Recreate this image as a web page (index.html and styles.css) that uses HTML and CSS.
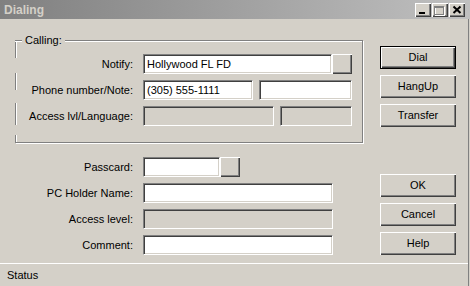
FILE: index.html
```html
<!doctype html>
<html>
<head>
<meta charset="UTF-8">
<title>Dialing</title>
<link rel="stylesheet" href="styles.css">
</head>
<body>
<div class="window">
  <div class="titlebar">
    <span class="title">Dialing</span>
    <div class="caption-buttons">
      <span class="capbtn">
        <svg width="16" height="14" viewBox="0 0 16 14"><rect x="4" y="9" width="6" height="2" fill="#000"/></svg>
      </span>
      <span class="capbtn">
        <svg width="16" height="14" viewBox="0 0 16 14">
          <rect x="3.5" y="4.5" width="9" height="8" fill="none" stroke="#fff"/>
          <rect x="2.5" y="3.5" width="9" height="8" fill="none" stroke="#808080"/>
          <rect x="3" y="4" width="8" height="1" fill="#808080"/>
        </svg>
      </span>
      <span class="capbtn close">
        <svg width="16" height="14" viewBox="0 0 16 14">
          <path d="M4.5 3.5l7 6.5M11.5 3.5l-7 6.5" stroke="#000" stroke-width="2" fill="none"/>
        </svg>
      </span>
    </div>
  </div>

  <div class="client">
    <div class="main">
      <div class="leftcol">
        <div class="groupbox">
          <span class="legend">Calling:</span>
          <div class="row">
            <span class="lbl">Notify:</span>
            <div class="edit w-notify">Hollywood FL FD</div>
            <div class="btn browse"></div>
          </div>
          <div class="row">
            <span class="lbl">Phone number/Note:</span>
            <div class="edit w-phone">(305) 555-1111</div>
            <div class="edit w-note"></div>
          </div>
          <div class="row row-last">
            <span class="lbl">Access lvl/Language:</span>
            <div class="edit disabled w-access"></div>
            <div class="edit disabled w-lang"></div>
          </div>
        </div>

        <div class="form">
          <div class="row">
            <span class="lbl">Passcard:</span>
            <div class="edit w-pass"></div>
            <div class="btn browse"></div>
          </div>
          <div class="row">
            <span class="lbl">PC Holder Name:</span>
            <div class="edit w-full"></div>
          </div>
          <div class="row">
            <span class="lbl">Access level:</span>
            <div class="edit disabled w-full"></div>
          </div>
          <div class="row">
            <span class="lbl">Comment:</span>
            <div class="edit w-full"></div>
          </div>
        </div>
      </div>

      <div class="buttons">
        <div class="btn cmd default">Dial</div>
        <div class="btn cmd">HangUp</div>
        <div class="btn cmd">Transfer</div>
        <div class="btn cmd first-lower">OK</div>
        <div class="btn cmd">Cancel</div>
        <div class="btn cmd">Help</div>
      </div>
    </div>
    <div class="status">Status</div>
  </div>
</div>
</body>
</html>
```

FILE: styles.css
```css
body {
  margin: 0;
  padding: 0;
  background: #d4d0c8;
  font-family: "Liberation Sans", Arial, sans-serif;
  font-size: 11px;
  color: #000;
}

.window {
  width: 470px;
  height: 286px;
  overflow: hidden;
  background: #d4d0c8;
}

/* title bar */
.titlebar {
  height: 19px;
  display: flex;
  align-items: center;
  justify-content: space-between;
  background: linear-gradient(to right, #808080, #c0c0c0);
}

.title {
  padding-left: 4px;
  font-size: 12px;
  font-weight: bold;
  color: #d4d0c8;
}

.caption-buttons {
  display: flex;
  gap: 1px;
  padding-right: 5px;
  padding-top: 1px;
}

.capbtn {
  width: 16px;
  height: 14px;
  box-sizing: border-box;
  background: #d4d0c8;
  box-shadow: inset 1px 1px #fff, inset -1px -1px #404040, inset -2px -2px #808080;
}

.capbtn svg {
  display: block;
}

/* client area */
.client {
  height: 267px;
  margin-right: 1px;
  border-right: 1px solid #808080;
}

.main {
  height: 244px;
  display: flex;
  padding: 21px 0 0 15px;
  box-sizing: border-box;
}

.leftcol {
  width: 348px;
}

.groupbox {
  position: relative;
  height: 103px;
  box-sizing: border-box;
  border: 1px solid #808080;
  border-left: 0;
  padding: 13px 0 0 1px;
  box-shadow: inset 0 1px #fff, 1px 1px #fff;
  background:
    linear-gradient(#808080 0 17px, transparent 17px 32px, #808080 32px 49px, transparent 49px 62px, #808080 62px 84px, transparent 84px 94px, #808080 94px) 0 0 / 1px 100% no-repeat,
    linear-gradient(#fff 0 17px, transparent 17px 32px, #fff 32px 49px, transparent 49px 62px, #fff 62px 84px, transparent 84px 94px, #fff 94px) 1px 0 / 1px 100% no-repeat;
}

.legend {
  position: absolute;
  top: -7px;
  left: 7px;
  padding: 0 3px;
  line-height: 13px;
  background: #d4d0c8;
}

.row {
  display: flex;
  height: 20px;
  line-height: 20px;
  margin-bottom: 6px;
}

.lbl {
  width: 117px;
  margin-right: 10px;
  text-align: right;
  white-space: nowrap;
}

.form {
  padding-top: 14px;
}

.form .lbl {
  width: 118px;
}

/* sunken edit fields */
.edit {
  height: 20px;
  box-sizing: border-box;
  background: #fff;
  border: 1px solid;
  border-color: #808080 #fff #fff #808080;
  box-shadow: inset 1px 1px #404040, inset -1px -1px #d4d0c8;
  padding: 0 3px;
  line-height: 18px;
  white-space: nowrap;
}

.edit.disabled {
  background: #d4d0c8;
}

.w-notify { width: 189px; }
.w-phone { width: 110px; margin-right: 6px; }
.w-note { width: 93px; }
.w-access { width: 131px; margin-right: 6px; }
.w-lang { width: 72px; }
.w-pass { width: 77px; }
.w-full { width: 190px; }

/* raised buttons */
.btn {
  box-sizing: border-box;
  background: #d4d0c8;
  box-shadow: inset 1px 1px #fff, inset -1px -1px #404040, inset -2px -2px #808080;
  text-align: center;
}

.browse {
  width: 20px;
  height: 20px;
}

.buttons {
  margin-left: 17px;
  padding-top: 6px;
  display: flex;
  flex-direction: column;
  gap: 6px;
}

.cmd {
  width: 76px;
  height: 23px;
  line-height: 22px;
}

.cmd.default {
  border: 1px solid #000;
  line-height: 20px;
}

.cmd.first-lower {
  margin-top: 41px;
}

.status {
  border-top: 1px solid #fff;
  height: 22px;
  line-height: 22px;
  padding-left: 7px;
}
```
